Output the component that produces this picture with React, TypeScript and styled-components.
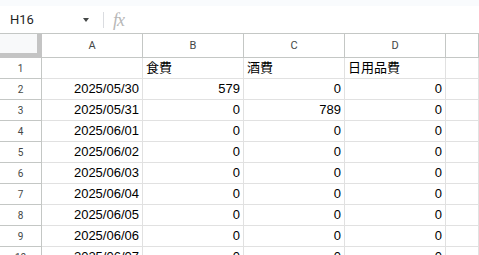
import React from "react";
import styled, { createGlobalStyle } from "styled-components";

const GlobalStyle = createGlobalStyle`
  html, body {
    margin: 0;
    padding: 0;
    background: #ffffff;
    font-family: "Liberation Sans", Arial, sans-serif;
    overflow: hidden;
  }
`;

const Page = styled.div`
  width: 479px;
  height: 255px;
  overflow: hidden;
  display: flex;
  flex-direction: column;
`;

const TopStrip = styled.div`
  height: 6px;
  background: #f9fbfd;
  flex: none;
`;

const FormulaBar = styled.div`
  height: 27px;
  flex: none;
  display: flex;
  align-items: center;
  border-bottom: 1px solid #c4c7c5;
  background: #ffffff;
`;

const NameBox = styled.div`
  width: 95px;
  padding-left: 10px;
  box-sizing: border-box;
  display: flex;
  align-items: center;
  justify-content: space-between;
  padding-right: 6px;
  font-family: Roboto, "Liberation Sans", sans-serif;
  font-size: 13px;
  color: #1f1f1f;
`;

const Caret = styled.span`
  width: 0;
  height: 0;
  border-left: 3.5px solid transparent;
  border-right: 3.5px solid transparent;
  border-top: 4px solid #444746;
`;

const Divider = styled.div`
  width: 1px;
  height: 16px;
  margin-left: 8px;
  background: #dadce0;
`;

const Fx = styled.span`
  margin-left: 9px;
  font-family: "Liberation Serif", serif;
  font-style: italic;
  font-size: 18px;
  line-height: 18px;
  color: #b7b7b7;
  letter-spacing: -1px;
`;

const Grid = styled.div`
  display: grid;
  grid-template-columns: 42px repeat(4, 101px) 1fr;
  grid-auto-rows: 21px;
  grid-template-rows: 24px;
`;

const Corner = styled.div`
  background: #f8f9fa;
  border-right: 5px solid #c4c4c4;
  border-bottom: 5px solid #c4c4c4;
  box-sizing: border-box;
`;

const ColHead = styled.div`
  box-sizing: border-box;
  border-right: 1px solid #c4c7c5;
  border-bottom: 1px solid #c4c7c5;
  display: flex;
  align-items: center;
  justify-content: center;
  font-family: Roboto, "Liberation Sans", sans-serif;
  font-size: 11px;
  color: #444746;
`;

const RowHead = styled.div`
  box-sizing: border-box;
  border-right: 1px solid #c4c7c5;
  border-bottom: 1px solid #c4c7c5;
  display: flex;
  align-items: center;
  justify-content: center;
  font-family: Roboto, "Liberation Sans", sans-serif;
  font-size: 10px;
  color: #444746;
`;

const Cell = styled.div<{ $num?: boolean }>`
  box-sizing: border-box;
  border-right: 1px solid #e1e1e1;
  border-bottom: 1px solid #e1e1e1;
  display: flex;
  align-items: flex-end;
  justify-content: ${(p) => (p.$num ? "flex-end" : "flex-start")};
  padding: 0 3px 3px 3px;
  font-family: "Liberation Sans", "Noto Sans CJK JP", sans-serif;
  font-size: 13px;
  line-height: 15px;
  color: #000000;
  white-space: nowrap;
  overflow: hidden;
`;

const columns = ["A", "B", "C", "D", ""];

const rows: (string | number)[][] = [
  ["", "食費", "酒費", "日用品費"],
  ["2025/05/30", 579, 0, 0],
  ["2025/05/31", 0, 789, 0],
  ["2025/06/01", 0, 0, 0],
  ["2025/06/02", 0, 0, 0],
  ["2025/06/03", 0, 0, 0],
  ["2025/06/04", 0, 0, 0],
  ["2025/06/05", 0, 0, 0],
  ["2025/06/06", 0, 0, 0],
  ["2025/06/07", 0, 0, 0],
];

export default function App() {
  return (
    <Page>
      <GlobalStyle />
      <TopStrip />
      <FormulaBar>
        <NameBox>
          H16
          <Caret />
        </NameBox>
        <Divider />
        <Fx>fx</Fx>
      </FormulaBar>
      <Grid>
        <Corner />
        {columns.map((c, i) => (
          <ColHead key={i}>{c}</ColHead>
        ))}
        {rows.map((r, ri) => (
          <React.Fragment key={ri}>
            <RowHead>{ri + 1}</RowHead>
            {r.map((v, ci) => (
              <Cell key={ci} $num={ri > 0}>
                {v}
              </Cell>
            ))}
            <Cell />
          </React.Fragment>
        ))}
      </Grid>
    </Page>
  );
}
